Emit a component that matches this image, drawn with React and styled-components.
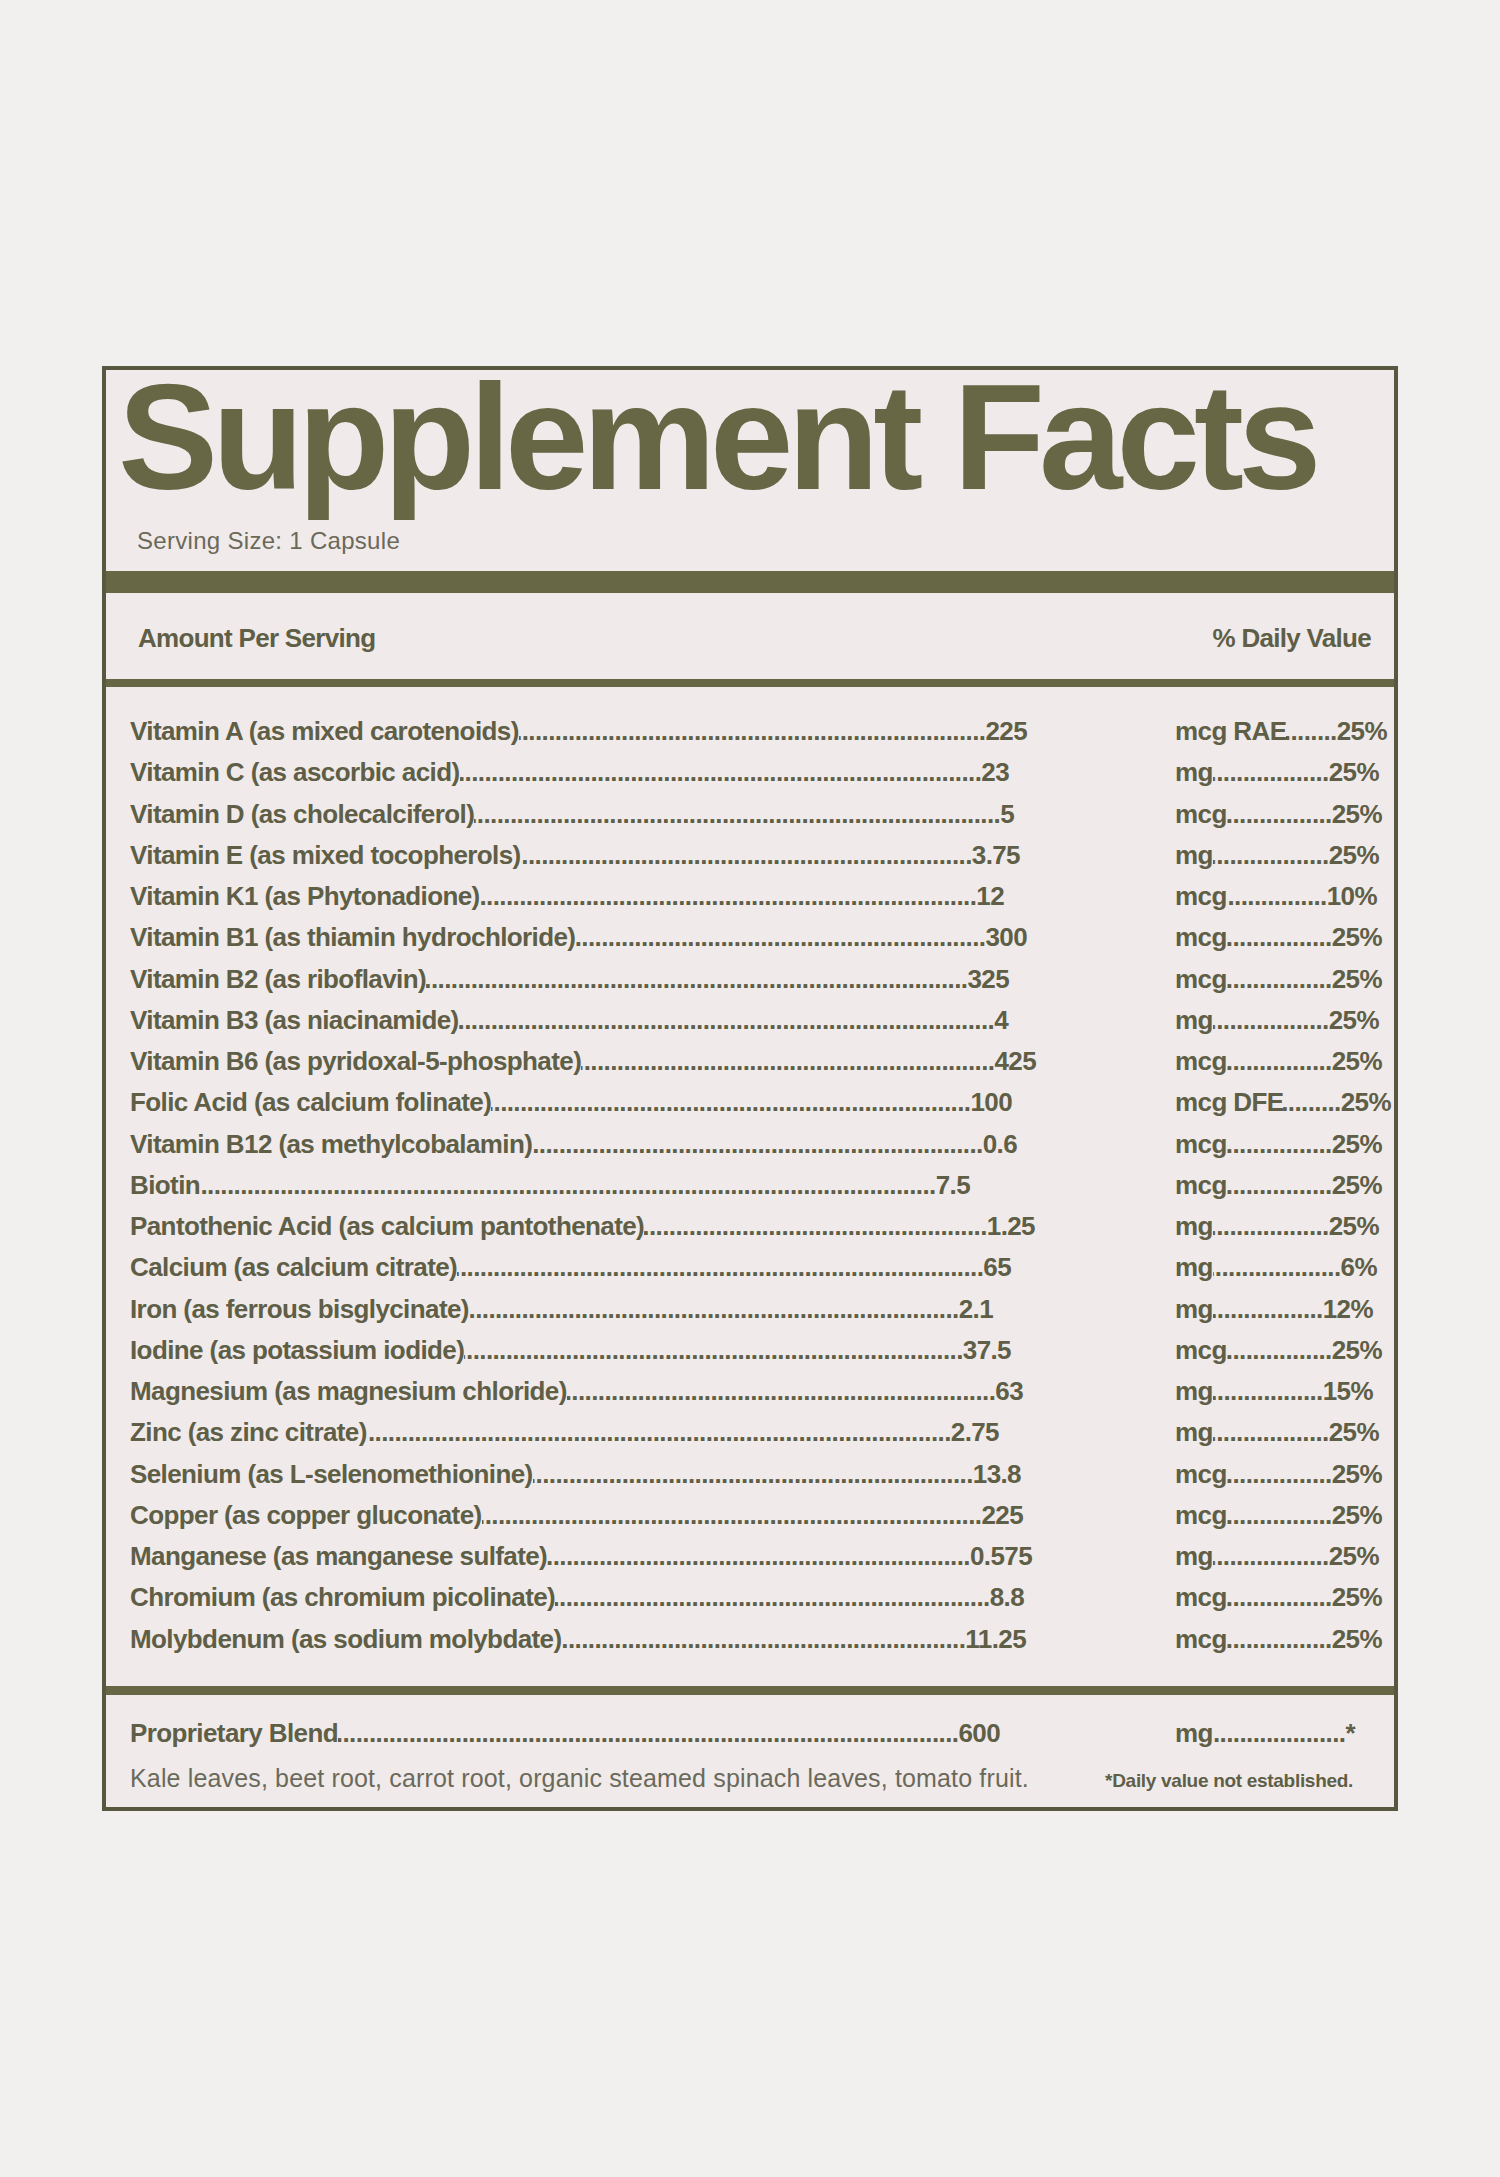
import React from 'react'
import styled, { createGlobalStyle } from 'styled-components'

const GlobalStyle = createGlobalStyle`
  html, body {
    margin: 0;
    padding: 0;
    background: #f2f0ee;
  }
  body {
    font-family: 'Liberation Sans', Arial, sans-serif;
  }
`

const colors = {
  ink: '#5f5e47',
  olive: '#676645',
  border: '#58573f',
  soft: '#6b695a',
  panel: '#f0ebea'
}

const NAME_X = 130
const UNIT_X = 1175
const DOTS = '.'.repeat(220)

const rows = [
  ['Vitamin A (as mixed carotenoids)', '225', 1027, 'mcg RAE', '25%', 1387],
  ['Vitamin C (as ascorbic acid)', '23', 1009, 'mg', '25%', 1379],
  ['Vitamin D (as cholecalciferol)', '5', 1014, 'mcg', '25%', 1382],
  ['Vitamin E (as mixed tocopherols)', '3.75', 1020, 'mg', '25%', 1379],
  ['Vitamin K1 (as Phytonadione)', '12', 1004, 'mcg', '10%', 1377],
  ['Vitamin B1 (as thiamin hydrochloride)', '300', 1027, 'mcg', '25%', 1382],
  ['Vitamin B2 (as riboflavin)', '325', 1009, 'mcg', '25%', 1382],
  ['Vitamin B3 (as niacinamide)', '4', 1008, 'mg', '25%', 1379],
  ['Vitamin B6 (as pyridoxal-5-phosphate)', '425', 1036, 'mcg', '25%', 1382],
  ['Folic Acid (as calcium folinate)', '100', 1012, 'mcg DFE', '25%', 1391],
  ['Vitamin B12 (as methylcobalamin)', '0.6', 1017, 'mcg', '25%', 1382],
  ['Biotin', '7.5', 970, 'mcg', '25%', 1382],
  ['Pantothenic Acid (as calcium pantothenate)', '1.25', 1035, 'mg', '25%', 1379],
  ['Calcium (as calcium citrate)', '65', 1011, 'mg', '6%', 1377],
  ['Iron (as ferrous bisglycinate)', '2.1', 993, 'mg', '12%', 1373],
  ['Iodine (as potassium iodide)', '37.5', 1011, 'mcg', '25%', 1382],
  ['Magnesium (as magnesium chloride)', '63', 1023, 'mg', '15%', 1373],
  ['Zinc (as zinc citrate)', '2.75', 999, 'mg', '25%', 1379],
  ['Selenium (as L-selenomethionine)', '13.8', 1021, 'mcg', '25%', 1382],
  ['Copper (as copper gluconate)', '225', 1023, 'mcg', '25%', 1382],
  ['Manganese (as manganese sulfate)', '0.575', 1032, 'mg', '25%', 1379],
  ['Chromium (as chromium picolinate)', '8.8', 1024, 'mcg', '25%', 1382],
  ['Molybdenum (as sodium molybdate)', '11.25', 1026, 'mcg', '25%', 1382]
]

const Page = styled.main`
  min-height: 100vh;
  display: flex;
  align-items: center;
  justify-content: center;
`

const Label = styled.section`
  width: 1296px;
  box-sizing: border-box;
  border: 4px solid ${colors.border};
  background: ${colors.panel};
  display: flex;
  flex-direction: column;
  color: ${colors.ink};
`

const Title = styled.h1`
  margin: 0;
  padding-left: 12px;
  font-size: 150px;
  line-height: 134px;
  font-weight: 700;
  letter-spacing: -5.9px;
  color: ${colors.olive};
  white-space: nowrap;
`

const Serving = styled.p`
  margin: 22px 0 0;
  padding-left: 31px;
  font-size: 24px;
  line-height: 30px;
  letter-spacing: 0.3px;
  color: ${colors.soft};
`

const Rule = styled.div`
  height: ${({ $size }) => $size}px;
  margin-top: ${({ $gap = 0 }) => $gap}px;
  background: ${colors.olive};
  flex: none;
`

const HeaderRow = styled.div`
  display: flex;
  justify-content: space-between;
  padding: 30px 23px 26px 32px;
  font-size: 26px;
  line-height: 30px;
  font-weight: 700;
  letter-spacing: -0.7px;
`

const Table = styled.div`
  padding: 24px 0 26px;
`

const Footer = styled.div`
  padding: 18px 0 8px;
`

const Row = styled.div`
  display: grid;
  grid-template-columns: ${UNIT_X - NAME_X}px 1fr;
  padding-left: ${NAME_X - 106}px;
  height: 41.25px;
  align-items: center;
  font-size: 26px;
  line-height: 41.25px;
  font-weight: 700;
  letter-spacing: -0.6px;
  white-space: nowrap;
`

const Cell = styled.div`
  display: flex;
  width: ${({ $width }) => $width}px;
`

const Text = styled.span`
  flex: none;
`

const Leader = styled.span`
  flex: 1 1 0;
  min-width: 0;
  overflow: hidden;
  direction: rtl;

  &::before {
    content: '${DOTS}';
  }
`

const NoteRow = styled.div`
  display: flex;
  justify-content: space-between;
  align-items: baseline;
  margin-top: 6px;
  padding: 0 41px 0 ${NAME_X - 106}px;
  line-height: 36px;
  white-space: nowrap;
`

const Ingredients = styled.span`
  font-size: 25px;
  letter-spacing: 0.15px;
  color: ${colors.soft};
`

const Footnote = styled.span`
  font-size: 19px;
  font-weight: 700;
  letter-spacing: -0.3px;
`

const Line = ({ name, amount, amountEnd, unit, value, valueEnd }) => (
  <Row>
    <Cell $width={amountEnd - NAME_X}>
      <Text>{name}</Text>
      <Leader />
      <Text>{amount}</Text>
    </Cell>
    <Cell $width={valueEnd - UNIT_X}>
      <Text>{unit}</Text>
      <Leader />
      <Text>{value}</Text>
    </Cell>
  </Row>
)

const App = () => (
  <Page>
    <GlobalStyle />
    <Label>
      <Title>Supplement Facts</Title>
      <Serving>Serving Size: 1 Capsule</Serving>
      <Rule $size={22} $gap={15} />
      <HeaderRow>
        <span>Amount Per Serving</span>
        <span>% Daily Value</span>
      </HeaderRow>
      <Rule $size={8} />
      <Table>
        {rows.map(([name, amount, amountEnd, unit, value, valueEnd]) => (
          <Line
            key={name}
            name={name}
            amount={amount}
            amountEnd={amountEnd}
            unit={unit}
            value={value}
            valueEnd={valueEnd}
          />
        ))}
      </Table>
      <Rule $size={9} />
      <Footer>
        <Line
          name="Proprietary Blend"
          amount="600"
          amountEnd={1000}
          unit="mg"
          value="*"
          valueEnd={1355}
        />
        <NoteRow>
          <Ingredients>
            Kale leaves, beet root, carrot root, organic steamed spinach leaves, tomato fruit.
          </Ingredients>
          <Footnote>*Daily value not established.</Footnote>
        </NoteRow>
      </Footer>
    </Label>
  </Page>
)

export default App
